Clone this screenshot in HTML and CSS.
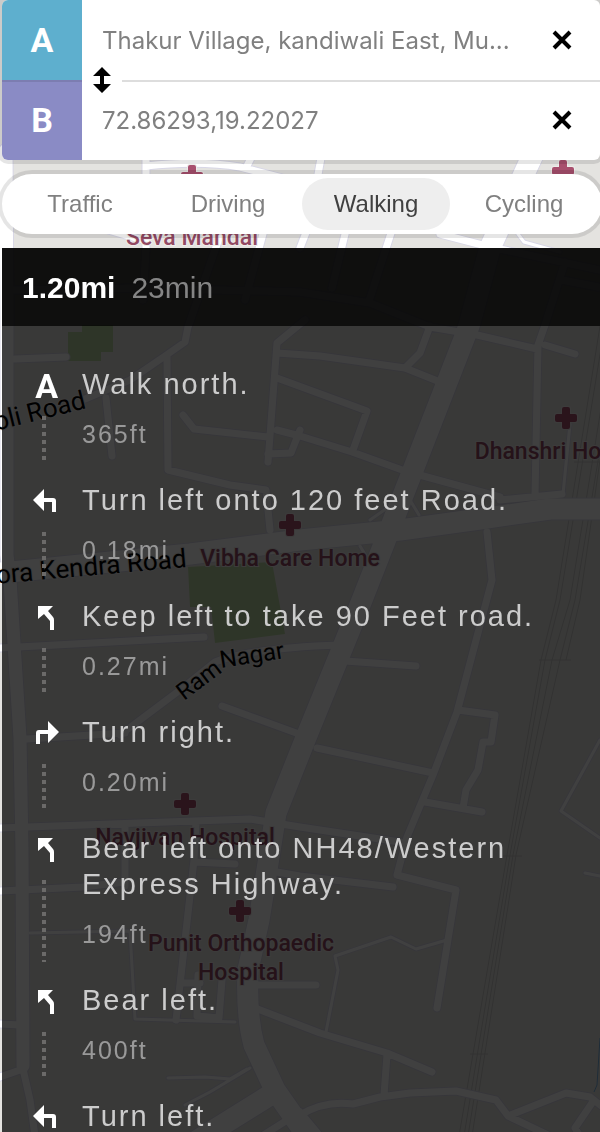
FILE: index.html
```html
<!DOCTYPE html>
<html lang="en">
<head>
<meta charset="utf-8">
<meta name="viewport" content="width=device-width, initial-scale=1">
<title>Directions</title>
<link rel="stylesheet" href="styles.css">
</head>
<body>
<svg class="map" viewBox="0 0 600 1132" preserveAspectRatio="xMinYMin slice" aria-hidden="true">
  <defs>
    <path id="lanes" d="M30 933L130 931L135 1019L235 1022 M326 1032L338 970L335 956L391 937L416 949L447 940 M600 740L561 811L600 838 M585 873L600 876 M168 1078L205 1077L230 1079L247 1069 M185 1105L210 1092L250 1068 M518 234L524 242L560 252 M530 180L540 160 M570 424L563 494 M410 500L419 515 M370 520L390 506 M360 546L366 556"/>
    <path id="streets" d="M146 160L146 248L143 300 M146 166Q200 160 240 167L290 180 M251 158L246 168 M108 230L146 241 M264 230L245 300 M222 230L188 327L185 342L165 356L130 380L85 399 M321 158L317 180 M307 230L300 248 M346 230L332 288 M392 230L370 298 M14 290L140 288L300 292L370 303L430 327L477 335L537 349 M440 234L490 247L600 270 M545 325L565 262 M562 280L598 287 M15 359L66 357 M167 356L168 470L230 485L266 490L270 530 M106 398L112 456 M305 320L277 343L268 462 M277 353L320 356L405 368L440 382 M277 378L367 411L353 450 M183 415L194 429L268 437 M268 454L291 453L300 430 M277 430L300 436L352 452L405 471L500 497 M430 326L420 353L405 368 M545 325L538 345L535 495 M545 345L575 354 M562 494L500 500 M487 532L492 580L457 712L433 775L407 837L397 875L456 890L437 1008 M458 710L495 715L491 742L483 742L478 770L466 790L463 808 M425 802L482 812 M317 748L433 773 M345 661L416 666 M120 735L180 690L215 662Q250 648 340 645 M27 739L125 733 M222 706L310 738 M0 648L204 637 M0 828L250 819L300 827L400 842 M125 826L125 886 M196 822L194 860L176 1020 M194 862L235 864 M0 891L83 887L125 882 M183 983L200 983 M198 975L197 1016L219 1018L222 980 M258 985L316 985 M265 870L300 876L393 887 M255 1008L320 1033L387 1053L432 1072 M387 1055L384 1095 M300 1115Q325 1100 353 1104L380 1097L410 1093L456 1091L496 1100L508 1116L566 1093L590 1097L604 1108 M508 1116L550 1136 M592 1103L575 1128L580 1136 M0 1077L23 1069L30 1100L35 1136 M0 1024L20 1025 M262 1136L300 1112L320 1136"/>
    <path id="avenues" d="M6 150L7 326L7 555L10 580L20 738L22 850L23 1066"/>
    <path id="highways" d="M535 150L490 248L469 326L413 470L362 600L305 740L276 813L259 920L248 970Q246 1015 254 1045L275 1090L310 1140 M-10 574L190 554L300 540L400 530L480 519L550 509L610 509 M190 1145L275 1092"/>
    <path id="cross" d="M-2 -11h4a2 2 0 0 1 2 2v5h5a2 2 0 0 1 2 2v4a2 2 0 0 1-2 2h-5v5a2 2 0 0 1-2 2h-4a2 2 0 0 1-2-2v-5h-5a2 2 0 0 1-2-2v-4a2 2 0 0 1 2-2h5v-5a2 2 0 0 1 2-2z"/>
  </defs>
  <rect class="land" width="600" height="1132"/>
  <path class="park" d="M82 325H113V352H101V361H68V332H82z M188 567L272 562L285 634L215 643L211 607H190z"/>
  <path class="rail" d="M600 326L556 600L541 660L507 855L459 1136 M604 330L560 600L545 660L510 855L464 1136 M612 340L570 600L552 660L513 855L468 1136 M618 340L575 600L560 660L516 855L472 1136 M600 460L580 600L566 660 M539 660H571 M503 856H522 M470 1054H488 M574 462H600"/>
  <path class="water" d="M600 1038L597 1085L594 1092"/>
  <g class="casing">
    <use href="#lanes" stroke-width="5"/>
    <use href="#streets" stroke-width="9"/>
    <use href="#avenues" stroke-width="15"/>
    <use href="#highways" stroke-width="23"/>
  </g>
  <g class="road">
    <use href="#lanes" stroke-width="3"/>
    <use href="#streets" stroke-width="7"/>
    <use href="#avenues" stroke-width="13"/>
    <use href="#highways" stroke-width="21"/>
  </g>
  <g class="poi-icon">
    <use href="#cross" x="192" y="176"/>
    <use href="#cross" x="563" y="171"/>
    <use href="#cross" x="566" y="418"/>
    <use href="#cross" x="290" y="525"/>
    <use href="#cross" x="185" y="804"/>
    <use href="#cross" x="240" y="911"/>
  </g>
  <g class="poi">
    <text x="192" y="245">Seva Mandal</text>
    <text x="538" y="459">Dhanshri Ho</text>
    <text x="290" y="566">Vibha Care Home</text>
    <text x="185" y="845">Navjivan Hospital</text>
    <text x="241" y="951">Punit Orthopaedic</text>
    <text x="241" y="980">Hospital</text>
  </g>
  <g class="street-name">
    <text class="major" transform="translate(87 408) rotate(-14)">ooli Road</text>
    <text class="major" transform="translate(187 567) rotate(-5)">ora Kendra Road</text>
    <text transform="translate(184 701) rotate(-37)">Ram</text>
    <text transform="translate(221 668) rotate(-9)">Nagar</text>
  </g>
</svg>

<main class="app">
  <form class="route">
    <div class="stop">
      <label class="badge badge-a" for="origin">A</label>
      <input class="place" id="origin" type="text" value="Thakur Village, kandiwali East, Mu...">
      <button class="clear" type="button" aria-label="Clear origin"><svg width="20" height="20" viewBox="0 0 20 20"><path d="M2 2L18 18M18 2L2 18"/></svg></button>
    </div>
    <div class="stop">
      <label class="badge badge-b" for="destination">B</label>
      <input class="place" id="destination" type="text" value="72.86293,19.22027">
      <button class="clear" type="button" aria-label="Clear destination"><svg width="20" height="20" viewBox="0 0 20 20"><path d="M2 2L18 18M18 2L2 18"/></svg></button>
    </div>
    <button class="swap" type="button" aria-label="Swap origin and destination"><svg width="18" height="26" viewBox="0 0 18 26"><path d="M9 0L18 9H11V17H18L9 26L0 17H7V9H0z"/></svg></button>
  </form>

  <div class="modes" role="radiogroup" aria-label="Travel mode">
    <input type="radio" name="mode" id="traffic"><label for="traffic">Traffic</label>
    <input type="radio" name="mode" id="driving"><label for="driving">Driving</label>
    <input type="radio" name="mode" id="walking" checked><label for="walking">Walking</label>
    <input type="radio" name="mode" id="cycling"><label for="cycling">Cycling</label>
  </div>

  <section class="panel">
    <h1 class="summary"><strong>1.20mi</strong> <span>23min</span></h1>
    <ol class="steps">
      <li class="step"><div class="track"><b class="icon depart">A</b></div><div class="text"><p class="turn">Walk north.</p><p class="distance">365ft</p></div></li>
      <li class="step"><div class="track"><svg class="icon" viewBox="0 0 28 36"><path d="M3 18L14 7V16H23Q26 16 26 19V30H22V20H14V29z"/></svg></div><div class="text"><p class="turn">Turn left onto 120 feet Road.</p><p class="distance">0.18mi</p></div></li>
      <li class="step"><div class="track"><svg class="icon" viewBox="0 0 28 36"><path d="M8 8H23L18 13L23 19Q24 20 24 22V32H20V23L14 16L8 21z"/></svg></div><div class="text"><p class="turn">Keep left to take 90 Feet road.</p><p class="distance">0.27mi</p></div></li>
      <li class="step"><div class="track"><svg class="icon" viewBox="0 0 28 36"><path d="M29 18L18 7V16H9Q6 16 6 19V30H10V20H18V29z"/></svg></div><div class="text"><p class="turn">Turn right.</p><p class="distance">0.20mi</p></div></li>
      <li class="step"><div class="track"><svg class="icon" viewBox="0 0 28 36"><path d="M8 8H23L18 13L23 19Q24 20 24 22V32H20V23L14 16L8 21z"/></svg></div><div class="text"><p class="turn">Bear left onto NH48/Western Express Highway.</p><p class="distance">194ft</p></div></li>
      <li class="step"><div class="track"><svg class="icon" viewBox="0 0 28 36"><path d="M8 8H23L18 13L23 19Q24 20 24 22V32H20V23L14 16L8 21z"/></svg></div><div class="text"><p class="turn">Bear left.</p><p class="distance">400ft</p></div></li>
      <li class="step"><div class="track"><svg class="icon" viewBox="0 0 28 36"><path d="M3 18L14 7V16H23Q26 16 26 19V30H22V20H14V29z"/></svg></div><div class="text"><p class="turn">Turn left.</p></div></li>
    </ol>
  </section>
</main>
</body>
</html>
```

FILE: styles.css
```css
* { box-sizing: border-box; }

body {
  margin: 0;
  height: 100vh;
  overflow: hidden;
  background: #e4e3e0;
  font-family: "Liberation Sans", Arial, sans-serif;
}

button {
  padding: 0;
  border: 0;
  background: none;
  cursor: pointer;
}

/* Map */
.map {
  position: fixed;
  inset: 0;
  width: 100%;
  height: 100%;
}
.land { fill: #e4e3e0; }
.park { fill: #b8d4a0; }
.rail { fill: none; stroke: #c6c6c4; stroke-width: 1; }
.water { fill: none; stroke: #7ab0dc; stroke-width: 1; }
.casing, .road { fill: none; stroke-linecap: round; stroke-linejoin: round; }
.casing { stroke: #d8d7e6; }
.road { stroke: #fff; }
.poi-icon { fill: #a8506e; stroke: #eeecea; stroke-width: 2; paint-order: stroke; }
.poi, .street-name {
  font-family: Roboto, sans-serif;
  stroke: #eeecea;
  stroke-width: 2px;
  paint-order: stroke;
}
.poi { fill: #924963; font-size: 23px; font-weight: 500; text-anchor: middle; }
.street-name { fill: #000; font-size: 24px; }
.major { font-size: 26px; text-anchor: end; }

/* Layout */
.app {
  position: relative;
  display: flex;
  flex-direction: column;
  gap: 14px;
  height: 100%;
  padding-left: 2px;
}

/* Origin and destination */
.route {
  position: relative;
  flex: none;
  border-radius: 6px;
  background: #fff;
  box-shadow: 0 0 0 4px rgba(0, 0, 0, .1);
}
.stop {
  position: relative;
  display: flex;
  height: 80px;
}
.stop + .stop::before {
  content: "";
  position: absolute;
  top: 0;
  left: 120px;
  right: 0;
  height: 2px;
  background: #ddd;
}
.badge {
  display: grid;
  place-items: center;
  width: 80px;
  color: #fff;
  font: bold 34px Roboto, sans-serif;
}
.badge-a { background: #5eafce; border-top-left-radius: 6px; }
.badge-b {
  background: #8a8bc5;
  border-bottom-left-radius: 6px;
  box-shadow: inset 0 2px #7c7db1;
}
.place {
  flex: 1;
  min-width: 0;
  padding: 0 0 0 20px;
  border: 0;
  outline: 0;
  background: none;
  color: #808080;
  font: 24px Inter, sans-serif;
}
.clear {
  display: grid;
  place-items: center;
  width: 76px;
}
.clear path { stroke: #000; stroke-width: 4; }
.swap {
  position: absolute;
  top: 67px;
  left: 91px;
  width: 18px;
  height: 26px;
}
.swap svg { display: block; }

/* Travel mode */
.modes {
  display: flex;
  flex: none;
  height: 60px;
  margin-right: -2px;
  padding: 4px;
  border-radius: 30px;
  background: #fff;
  box-shadow: 0 0 0 4px rgba(0, 0, 0, .1);
}
.modes input {
  position: absolute;
  opacity: 0;
  pointer-events: none;
}
.modes label {
  flex: 1;
  border-radius: 26px;
  color: #808080;
  font-size: 24px;
  line-height: 52px;
  text-align: center;
}
.modes input:checked + label { background: #eee; color: #404040; }

/* Directions */
.panel {
  flex: 1;
  min-height: 0;
  overflow: hidden;
  background: rgba(0, 0, 0, .75);
}
.summary {
  display: flex;
  gap: 16px;
  margin: 0;
  padding: 0 20px;
  background: rgba(0, 0, 0, .75);
  color: #fff;
  font-size: 30px;
  line-height: 80px;
  height: 78px;
}
.summary span { color: #858585; font-weight: normal; }
.steps {
  margin: 0;
  padding: 40px 40px 0 28px;
  list-style: none;
}
.step {
  display: flex;
  gap: 24px;
}
.track {
  display: flex;
  flex: none;
  flex-direction: column;
  align-items: center;
  gap: 14px;
  width: 28px;
  padding-bottom: 20px;
}
.step:not(:last-child) .track::after {
  content: "";
  flex: 1;
  width: 4px;
  background: repeating-linear-gradient(#6b6a69 0 4px, transparent 4px 8px);
}
.icon {
  flex: none;
  width: 28px;
  height: 36px;
  overflow: visible;
  fill: #fff;
}
.depart {
  color: #fff;
  font: bold 34px/40px Roboto, sans-serif;
  text-align: right;
}
.text { padding-bottom: 30px; }
.turn, .distance {
  margin: 0;
  line-height: 36px;
  letter-spacing: 2px;
}
.turn { color: #ccc; font-size: 29px; }
.distance { margin-top: 14px; color: #999; font-size: 25px; }
```
